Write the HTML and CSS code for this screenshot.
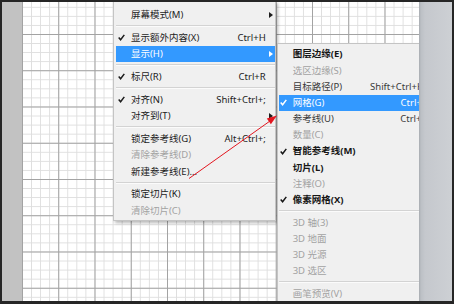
FILE: index.html
```html
<!DOCTYPE html>
<html lang="zh-CN">
<head>
<meta charset="utf-8">
<title>视图菜单</title>
<link rel="stylesheet" href="styles.css">
</head>
<body>
<div class="screen">
  <div class="strip-left"></div>
  <div class="canvas">
    <div class="menu menu-main">
      <div class="item"><span class="chk"></span><span class="lbl">屏幕模式(M)</span><span class="key"></span><span class="arr"><i class="tri"></i></span></div>
      <div class="sep"></div>
      <div class="item"><span class="chk"><svg width="7" height="7" viewBox="0 0 7 7"><path d="M0.7 3.6 L2.6 5.8 L6.3 0.9"/></svg></span><span class="lbl">显示额外内容(X)</span><span class="key">Ctrl+H</span><span class="arr"></span></div>
      <div class="item hl"><span class="chk"></span><span class="lbl">显示(H)</span><span class="key"></span><span class="arr"><i class="tri"></i></span></div>
      <div class="sep"></div>
      <div class="item"><span class="chk"><svg width="7" height="7" viewBox="0 0 7 7"><path d="M0.7 3.6 L2.6 5.8 L6.3 0.9"/></svg></span><span class="lbl">标尺(R)</span><span class="key">Ctrl+R</span><span class="arr"></span></div>
      <div class="sep"></div>
      <div class="item"><span class="chk"><svg width="7" height="7" viewBox="0 0 7 7"><path d="M0.7 3.6 L2.6 5.8 L6.3 0.9"/></svg></span><span class="lbl">对齐(N)</span><span class="key">Shift+Ctrl+;</span><span class="arr"></span></div>
      <div class="item"><span class="chk"></span><span class="lbl">对齐到(T)</span><span class="key"></span><span class="arr"><i class="tri"></i></span></div>
      <div class="sep"></div>
      <div class="item"><span class="chk"></span><span class="lbl">锁定参考线(G)</span><span class="key">Alt+Ctrl+;</span><span class="arr"></span></div>
      <div class="item dis"><span class="chk"></span><span class="lbl">清除参考线(D)</span><span class="key"></span><span class="arr"></span></div>
      <div class="item"><span class="chk"></span><span class="lbl">新建参考线(E)...</span><span class="key"></span><span class="arr"></span></div>
      <div class="sep"></div>
      <div class="item"><span class="chk"></span><span class="lbl">锁定切片(K)</span><span class="key"></span><span class="arr"></span></div>
      <div class="item dis"><span class="chk"></span><span class="lbl">清除切片(C)</span><span class="key"></span><span class="arr"></span></div>
    </div>

    <div class="menu menu-sub">
      <div class="item b"><span class="chk"></span><span class="lbl">图层边缘(E)</span><span class="key"></span><span class="arr"></span></div>
      <div class="item dis"><span class="chk"></span><span class="lbl">选区边缘(S)</span><span class="key"></span><span class="arr"></span></div>
      <div class="item mid"><span class="chk"></span><span class="lbl">目标路径(P)</span><span class="key">Shift+Ctrl+H</span><span class="arr"></span></div>
      <div class="item hl"><span class="chk"><svg width="7" height="7" viewBox="0 0 7 7"><path d="M0.7 3.6 L2.6 5.8 L6.3 0.9"/></svg></span><span class="lbl">网格(G)</span><span class="key">Ctrl+'</span><span class="arr"></span></div>
      <div class="item mid"><span class="chk"></span><span class="lbl">参考线(U)</span><span class="key">Ctrl+;</span><span class="arr"></span></div>
      <div class="item dis"><span class="chk"></span><span class="lbl">数量(C)</span><span class="key"></span><span class="arr"></span></div>
      <div class="item b"><span class="chk"><svg width="7" height="7" viewBox="0 0 7 7"><path d="M0.7 3.6 L2.6 5.8 L6.3 0.9"/></svg></span><span class="lbl">智能参考线(M)</span><span class="key"></span><span class="arr"></span></div>
      <div class="item b"><span class="chk"></span><span class="lbl">切片(L)</span><span class="key"></span><span class="arr"></span></div>
      <div class="item dis"><span class="chk"></span><span class="lbl">注释(O)</span><span class="key"></span><span class="arr"></span></div>
      <div class="item b"><span class="chk"><svg width="7" height="7" viewBox="0 0 7 7"><path d="M0.7 3.6 L2.6 5.8 L6.3 0.9"/></svg></span><span class="lbl">像素网格(X)</span><span class="key"></span><span class="arr"></span></div>
      <div class="sep"></div>
      <div class="item dis"><span class="chk"></span><span class="lbl">3D 轴(3)</span><span class="key"></span><span class="arr"></span></div>
      <div class="item dis"><span class="chk"></span><span class="lbl">3D 地面</span><span class="key"></span><span class="arr"></span></div>
      <div class="item dis"><span class="chk"></span><span class="lbl">3D 光源</span><span class="key"></span><span class="arr"></span></div>
      <div class="item dis"><span class="chk"></span><span class="lbl">3D 选区</span><span class="key"></span><span class="arr"></span></div>
      <div class="sep"></div>
      <div class="item dis"><span class="chk"></span><span class="lbl">画笔预览(V)</span><span class="key"></span><span class="arr"></span></div>
    </div>

    <svg class="pointer" width="397" height="299" viewBox="22 2 397 299">
      <line x1="189" y1="178.5" x2="270" y2="121" />
      <polygon points="277,115.5 270.9,124.2 266.8,118.4" />
    </svg>
  </div>
  <div class="strip-right"></div>
</div>
</body>
</html>
```

FILE: styles.css
```css
html, body {
  margin: 0;
  padding: 0;
}

body {
  width: 454px;
  height: 304px;
  overflow: hidden;
  font-family: "Noto Sans", "Noto Sans CJK SC", sans-serif;
  font-size: 9.5px;
}

.screen {
  box-sizing: border-box;
  width: 454px;
  height: 304px;
  display: flex;
  border: 2px solid #262626;
  border-bottom-width: 3px;
  background: #c2c2c2;
}

.strip-left {
  flex: none;
  width: 20px;
  background: #c2c2c2;
}

.canvas {
  position: relative;
  flex: none;
  width: 397px;
  height: 100%;
  overflow: hidden;
  background-color: #fff;
  background-image:
    linear-gradient(to right, #a2a2a2 1px, transparent 1px),
    linear-gradient(to bottom, #a2a2a2 1px, transparent 1px),
    linear-gradient(to right, #dedede 1px, transparent 1px),
    linear-gradient(to bottom, #dedede 1px, transparent 1px);
  background-size:
    36.25px 36.25px,
    36.25px 36.25px,
    9.0625px 9.0625px,
    9.0625px 9.0625px;
  background-position: 0 32px;
}

.strip-right {
  flex: 1;
  background: linear-gradient(to right, #a8acb1 0, #bcc0c5 2px, #c5c8cd 6px, #cdd0d4 100%);
}

/* menus */
.menu {
  position: absolute;
  box-sizing: border-box;
  background: #f0f0f0;
  border: 1px solid #c4c4c4;
}

.menu-main {
  left: 91px;
  top: -1px;
  width: 163px;
  padding: 4.85px 0 1px 2px;
  box-shadow: 2px 2px 3px rgba(0, 0, 0, 0.28);
  z-index: 1;
}

.menu-sub {
  left: 255px;
  top: 41px;
  width: 170px;
  padding: 2px 0 2px 1px;
  z-index: 2;
  box-shadow: 2px 2px 3px rgba(0, 0, 0, 0.2);
}

.item {
  display: grid;
  grid-template-columns: 15px 1fr auto 9.3px;
  align-items: center;
  height: 16.3px;
  color: #1c1c1c;
  white-space: nowrap;
}

.menu-sub .item {
  height: 16.2px;
  grid-template-columns: 13.7px 1fr auto 22px;
}

.item .lbl {
  line-height: 1;
}

.item .key {
  line-height: 1;
}

.item.hl {
  background: #3399ff;
  color: #fff;
}

.item.dis {
  color: #a2a2a2;
}

.item.mid {
  color: #3a3a3a;
}

.item.b {
  font-weight: 700;
  color: #161616;
}

.chk svg {
  display: block;
  margin-left: 2px;
}

.menu-sub .chk svg {
  margin-left: 1px;
}

.chk path {
  fill: none;
  stroke: currentColor;
  stroke-width: 1.5;
}

.arr {
  display: flex;
  align-items: center;
}

.tri {
  display: block;
  width: 0;
  height: 0;
  margin-left: 3px;
  border-left: 4px solid currentColor;
  border-top: 3.5px solid transparent;
  border-bottom: 3.5px solid transparent;
}

.sep {
  position: relative;
  height: 6.5px;
}

.sep::before {
  content: "";
  position: absolute;
  left: 0;
  right: 0;
  top: 2px;
  border-top: 1px solid #d3d3d3;
  border-bottom: 1px solid #fbfbfb;
}

.pointer {
  position: absolute;
  left: 0;
  top: 0;
  z-index: 3;
  pointer-events: none;
}

.pointer line {
  stroke: #e3161f;
  stroke-width: 1;
}

.pointer polygon {
  fill: #e3161f;
}
```
